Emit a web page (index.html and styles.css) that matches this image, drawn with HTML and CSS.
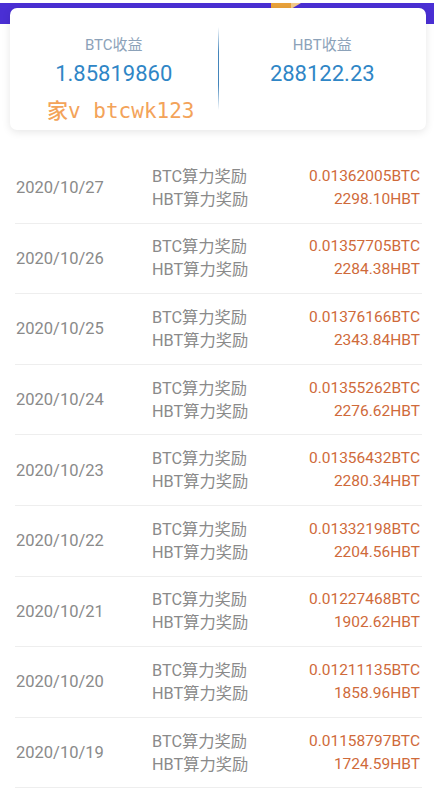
FILE: index.html
```html
<!DOCTYPE html>
<html lang="zh-CN">
  <head>
    <meta charset="UTF-8" />
    <meta name="viewport" content="width=device-width, initial-scale=1.0" />
    <title>算力收益</title>
    <link rel="stylesheet" href="styles.css">
  </head>
  <body>
    <div class="header">
      <svg class="header-art" width="40" height="6" viewBox="0 0 40 6">
        <rect x="0" y="0" width="20" height="6" fill="#e9a23b" />
        <polygon points="20,0 30,0 20,6" fill="#f3c98a" />
      </svg>
    </div>

    <div class="summary-card">
      <div class="summary-col">
        <div class="summary-label">BTC收益</div>
        <div class="summary-value">1.85819860</div>
        <div class="watermark">家v btcwk123</div>
      </div>
      <div class="summary-divider"></div>
      <div class="summary-col">
        <div class="summary-label">HBT收益</div>
        <div class="summary-value">288122.23</div>
      </div>
    </div>

    <div class="reward-list" id="rewardList"></div>

    <script>
      const rewards = [
        ["2020/10/27", "0.01362005", "2298.10"],
        ["2020/10/26", "0.01357705", "2284.38"],
        ["2020/10/25", "0.01376166", "2343.84"],
        ["2020/10/24", "0.01355262", "2276.62"],
        ["2020/10/23", "0.01356432", "2280.34"],
        ["2020/10/22", "0.01332198", "2204.56"],
        ["2020/10/21", "0.01227468", "1902.62"],
        ["2020/10/20", "0.01211135", "1858.96"],
        ["2020/10/19", "0.01158797", "1724.59"],
      ];

      const list = document.getElementById("rewardList");

      rewards.forEach(([date, btc, hbt]) => {
        const row = document.createElement("div");
        row.className = "reward-row";
        row.innerHTML = `
          <div class="reward-date">${date}</div>
          <div class="reward-labels">
            <div>BTC算力奖励</div>
            <div>HBT算力奖励</div>
          </div>
          <div class="reward-values">
            <div>${btc}BTC</div>
            <div>${hbt}HBT</div>
          </div>`;
        list.appendChild(row);
      });
    </script>
  </body>
</html>
```

FILE: styles.css
```css
:root {
  --purple: #4a2fd4;
  --label-blue: #8ca2b9;
  --value-blue: #2f86c6;
  --gray-text: #8a8a8a;
  --reward-color: #cf6a3a;
  --line-color: #eeeeee;
}

* {
  box-sizing: border-box;
  margin: 0;
  padding: 0;
}

body {
  font-family: Roboto, "Noto Sans CJK SC", sans-serif;
  background: #ffffff;
  width: 434px;
}

.header {
  position: relative;
  height: 21px;
  margin-top: 3px;
  background: var(--purple);
}

.header-art {
  position: absolute;
  left: 271px;
  top: 0;
}

.summary-card {
  position: relative;
  display: flex;
  height: 122px;
  margin: -16px 8px 0 10px;
  background: #ffffff;
  border-radius: 7px;
  box-shadow: 0 2px 8px rgba(0, 0, 0, 0.1);
}

.summary-col {
  flex: 1;
  display: flex;
  flex-direction: column;
  align-items: center;
  padding-top: 27px;
}

.summary-divider {
  width: 1px;
  margin: 19px 0 20px;
  background: linear-gradient(
    to bottom,
    rgba(47, 120, 180, 0),
    rgba(47, 120, 180, 0.9) 30%,
    rgba(47, 120, 180, 0.9) 70%,
    rgba(47, 120, 180, 0)
  );
}

.summary-label {
  font-size: 15px;
  line-height: 20px;
  color: var(--label-blue);
}

.summary-value {
  margin-top: 4px;
  font-size: 22px;
  line-height: 30px;
  color: var(--value-blue);
}

.watermark {
  margin: 8px 0 0 14px;
  font-family: "DejaVu Sans Mono", "Noto Sans CJK SC", monospace;
  font-size: 21px;
  font-weight: 500;
  line-height: 28px;
  color: #f3a35a;
  white-space: pre;
}

.reward-list {
  margin-top: 23px;
  padding: 0 12px 0 15px;
}

.reward-row {
  display: flex;
  align-items: center;
  height: 70.6px;
  padding: 0 2px 0 1px;
  border-bottom: 1px solid var(--line-color);
  font-size: 16px;
  line-height: 23px;
}

.reward-date {
  width: 136px;
  font-size: 16.5px;
  color: var(--gray-text);
}

.reward-labels {
  flex: 1;
  font-size: 16.3px;
  color: var(--gray-text);
}

.reward-values {
  font-size: 15.5px;
  text-align: right;
  color: var(--reward-color);
}
```
